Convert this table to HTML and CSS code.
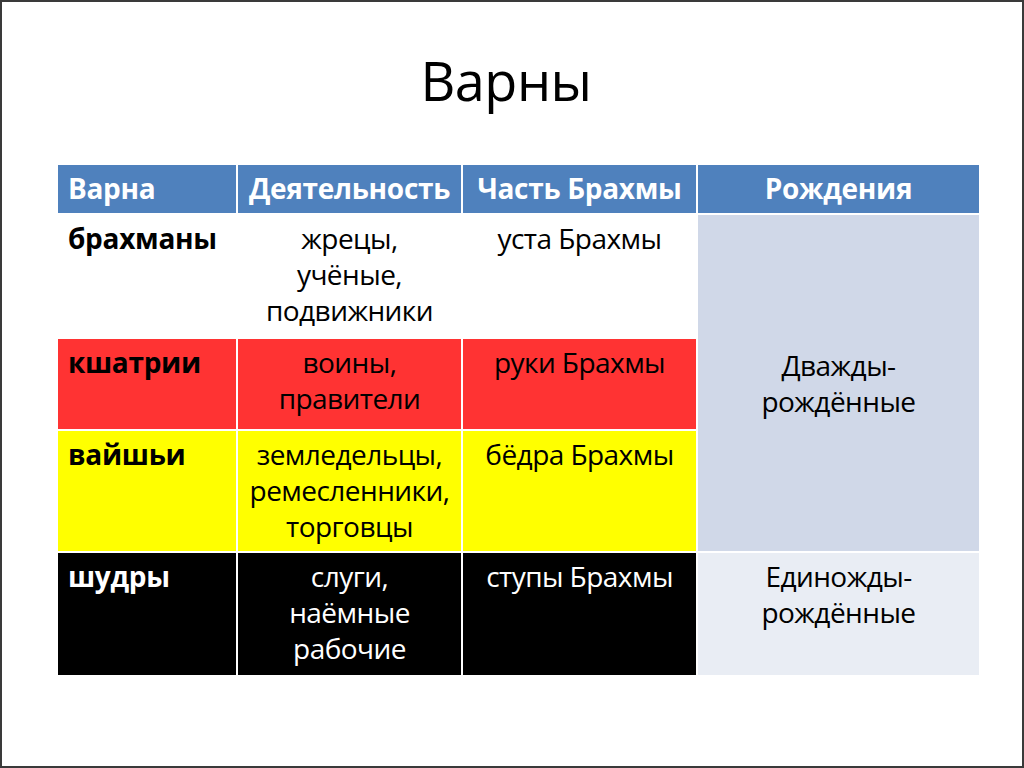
FILE: index.html
```html
<!DOCTYPE html>
<html lang="ru">
<head>
<meta charset="utf-8">
<title>Варны</title>
<link rel="stylesheet" href="styles.css">
</head>
<body>
<div class="slide">
  <h1 class="title">Варны</h1>
  <div class="table">
    <div class="cell head left">Варна</div>
    <div class="cell head">Деятельность</div>
    <div class="cell head">Часть Брахмы</div>
    <div class="cell head">Рождения</div>

    <div class="cell white left name">брахманы</div>
    <div class="cell white">жрецы,<br>учёные,<br>подвижники</div>
    <div class="cell white">уста Брахмы</div>
    <div class="cell merged">Дважды-<br>рождённые</div>

    <div class="cell red left name">кшатрии</div>
    <div class="cell red">воины,<br>правители</div>
    <div class="cell red">руки Брахмы</div>

    <div class="cell yellow left name">вайшьи</div>
    <div class="cell yellow">земледельцы,<br>ремесленники,<br>торговцы</div>
    <div class="cell yellow">бёдра Брахмы</div>

    <div class="cell black left name">шудры</div>
    <div class="cell black">слуги,<br>наёмные<br>рабочие</div>
    <div class="cell black">ступы Брахмы</div>
    <div class="cell once">Единожды-<br>рождённые</div>
  </div>
</div>
</body>
</html>
```

FILE: styles.css
```css
* { box-sizing: border-box; }
html, body { margin: 0; padding: 0; background: #fff; }
.slide {
  width: 1024px;
  height: 768px;
  border: 2px solid #3a3a3a;
  background: #fff;
  font-family: "Open Sans", "DejaVu Sans", sans-serif;
  color: #000;
  padding-top: 50px;
}
.title {
  margin: 0 0 56px 0;
  height: 57px;
  padding-right: 12px;
  text-align: center;
  font-weight: normal;
  font-size: 54px;
  line-height: 57px;
  letter-spacing: -0.5px;
}
.table {
  margin-left: 56px;
  width: 921px;
  display: grid;
  grid-template-columns: 178px 223px 233px 281px;
  grid-template-rows: 48px 122px 90px 120px 122px;
  gap: 2px;
}
.cell {
  font-size: 28px;
  line-height: 36px;
  text-align: center;
  padding: 5px 4px 0 4px;
  letter-spacing: -0.55px;
  white-space: nowrap;
}
.cell.left { text-align: left; padding-left: 10px; }
.cell.name { font-weight: bold; letter-spacing: -0.3px; }
.head {
  background: #4f81bd;
  color: #fff;
  font-weight: bold;
  letter-spacing: -0.3px;
  padding-top: 5px;
}
.white { background: #fff; }
.red { background: #ff3333; }
.yellow { background: #ffff00; }
.black { background: #000; color: #fff; }
.merged {
  grid-column: 4;
  grid-row: 2 / span 3;
  background: #d0d8e8;
  display: flex;
  flex-direction: column;
  justify-content: center;
  padding: 0 0 0 0;
}
.once {
  background: #e9edf4;
  padding-top: 5px;
}
```
